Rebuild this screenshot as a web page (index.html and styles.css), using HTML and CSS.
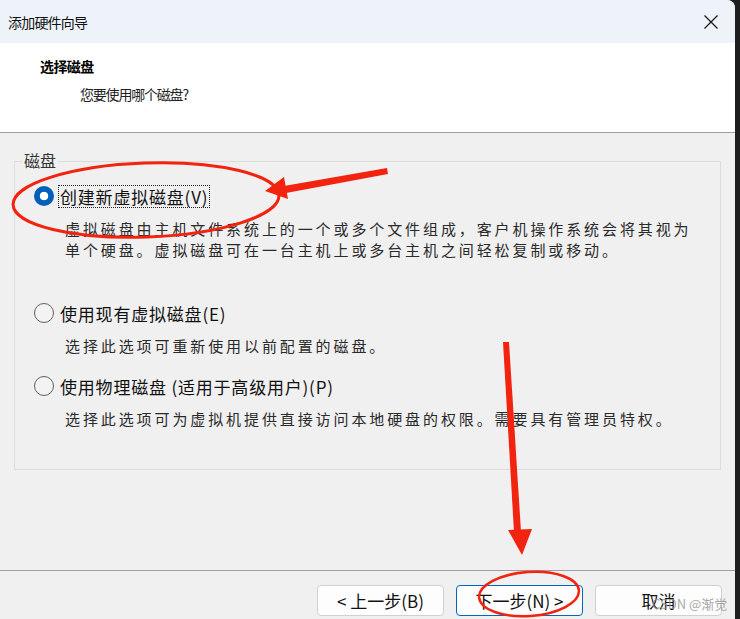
FILE: index.html
```html
<!DOCTYPE html>
<html lang="zh-CN">
<head>
<meta charset="utf-8">
<title>添加硬件向导</title>
<link rel="stylesheet" href="styles.css">
</head>
<body>
<div class="window">
  <div class="titlebar">
    <span class="title">添加硬件向导</span>
    <span class="close">
      <svg width="16" height="16" viewBox="0 0 16 16"><path d="M1.5 1.5 L14.5 14.5 M14.5 1.5 L1.5 14.5" stroke="#1a1a1a" stroke-width="1.3" fill="none"/></svg>
    </span>
  </div>
  <div class="header">
    <div class="h-title">选择磁盘</div>
    <div class="h-sub">您要使用哪个磁盘?</div>
  </div>
  <div class="main">
    <div class="group">
      <div class="legend">磁盘</div>
      <div class="row first">
        <span class="radio checked"></span>
        <span class="label focus">创建新虚拟磁盘(V)</span>
      </div>
      <div class="desc">虚拟磁盘由主机文件系统上的一个或多个文件组成，客户机操作系统会将其视为<br>单个硬盘。虚拟磁盘可在一台主机上或多台主机之间轻松复制或移动。</div>
      <div class="row second">
        <span class="radio"></span>
        <span class="label">使用现有虚拟磁盘(E)</span>
      </div>
      <div class="desc">选择此选项可重新使用以前配置的磁盘。</div>
      <div class="row third">
        <span class="radio"></span>
        <span class="label">使用物理磁盘 (适用于高级用户)(P)</span>
      </div>
      <div class="desc">选择此选项可为虚拟机提供直接访问本地硬盘的权限。需要具有管理员特权。</div>
    </div>
  </div>
  <div class="footer">
    <button class="btn">&lt; 上一步(B)</button>
    <button class="btn primary">下一步(N) &gt;</button>
    <button class="btn">取消</button>
  </div>
</div>
<div class="watermark">CSDN @渐觉</div>
<svg class="annot" width="740" height="619" viewBox="0 0 740 619">
  <ellipse cx="146" cy="200" rx="133" ry="37" fill="none" stroke="#f2230f" stroke-width="3" transform="rotate(-2 146 200)"/>
  <polygon points="387,168 388,174 286,193 284,186" fill="#f2230f"/>
  <polygon points="265,191 284,177 288,199" fill="#f2230f"/>
  <polygon points="503,342 509,342 521,532 514,532" fill="#f2230f"/>
  <polygon points="508,530 532,529 522,555" fill="#f2230f"/>
  <ellipse cx="529" cy="594" rx="50" ry="22" fill="none" stroke="#f2230f" stroke-width="2.5" transform="rotate(-4 529 594)"/>
</svg>
</body>
</html>
```
FILE: styles.css
```css
html, body {
  margin: 0;
  padding: 0;
}
body {
  background: #1e1e1e;
  width: 740px;
  height: 619px;
  overflow: hidden;
  position: relative;
  font-family: "Noto Sans CJK SC", "Noto Sans", sans-serif;
  color: #111;
}
.window {
  width: 735px;
  height: 619px;
  background: #f0f0f0;
  border-top-right-radius: 8px;
  overflow: hidden;
  display: flex;
  flex-direction: column;
}
.titlebar {
  height: 43px;
  flex: none;
  background: #eef2f9;
  display: flex;
  align-items: center;
  justify-content: space-between;
  padding: 0 16px 0 8px;
}
.title {
  font-size: 14px;
  letter-spacing: -0.8px;
  color: #111;
}
.close {
  display: flex;
  width: 16px;
  height: 16px;
  margin-top: 1px;
}
.header {
  height: 90px;
  flex: none;
  box-sizing: border-box;
  background: #ffffff;
  border-bottom: 1px solid #a0a0a0;
  padding-top: 13px;
}
.h-title {
  margin-left: 40px;
  font-size: 14px;
  line-height: 20px;
  font-weight: 700;
  letter-spacing: -0.6px;
  color: #000;
}
.h-sub {
  margin-left: 80px;
  margin-top: 8px;
  font-size: 14px;
  line-height: 20px;
  letter-spacing: -1.2px;
  color: #222;
}
.main {
  flex: 1;
  padding: 28px 14px 0 14px;
}
.group {
  border: 1px solid #dcdcdc;
  padding-bottom: 40px;
}
.legend {
  margin: -11px 0 0 7px;
  padding: 0 2px;
  width: fit-content;
  background: #f0f0f0;
  font-size: 16px;
  line-height: 18px;
  color: #333;
}
.row {
  display: flex;
  align-items: center;
  height: 24px;
  padding-left: 19px;
  gap: 4px;
}
.row.first { margin-top: 15px; }
.row.second { margin-top: 41px; }
.row.third { margin-top: 18px; }
.radio {
  width: 20px;
  height: 20px;
  box-sizing: border-box;
  border-radius: 50%;
  border: 1px solid #5f5f5f;
  background: #f3f3f3;
  flex: none;
}
.radio.checked {
  border: none;
  background: radial-gradient(circle, #ffffff 0 4px, #005fb8 4.6px);
}
.label {
  font-size: 17px;
  line-height: 21px;
  letter-spacing: 0.8px;
  padding: 0 1px;
  border: 1px dotted transparent;
  color: #111;
}
.label.focus {
  border-color: #222;
}
.desc {
  margin-top: 10px;
  padding-left: 50px;
  font-size: 15px;
  line-height: 21px;
  letter-spacing: 2.9px;
  color: #2a2a2a;
  white-space: nowrap;
}
.footer {
  flex: none;
  border-top: 1px solid #a0a0a0;
  display: flex;
  justify-content: flex-end;
  align-items: flex-start;
  padding: 14px 13px 0 0;
  box-sizing: border-box;
  height: 49px;
  gap: 12px;
}
.btn {
  width: 127px;
  height: 31px;
  background: #fdfdfd;
  border: 1px solid #d0d0d0;
  border-radius: 4px;
  font-family: "Noto Sans CJK SC", "Noto Sans", sans-serif;
  font-size: 17px;
  line-height: 20px;
  color: #111;
  padding: 0;
}
.btn.primary {
  border-color: #0067c0;
}
.watermark {
  position: absolute;
  left: 652px;
  top: 595px;
  font-size: 13px;
  line-height: 18px;
  color: rgba(150, 150, 150, 0.85);
  font-family: "Noto Sans CJK SC", "Noto Sans", sans-serif;
}
.annot {
  position: absolute;
  left: 0;
  top: 0;
  pointer-events: none;
}
```
